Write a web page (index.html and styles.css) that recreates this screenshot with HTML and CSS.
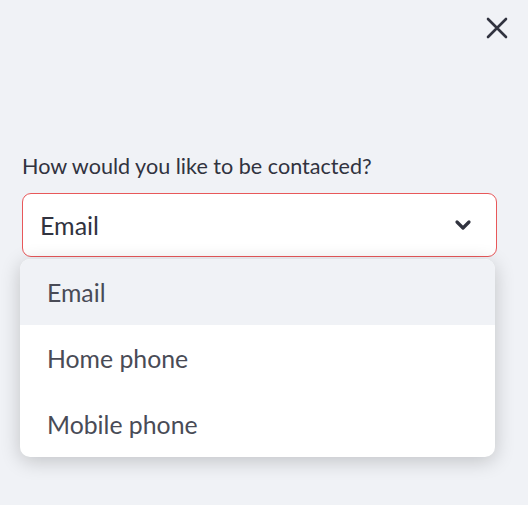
FILE: index.html
```html
<!DOCTYPE html>
<html>
<head>
<meta charset="utf-8">
<link rel="stylesheet" href="styles.css">
</head>
<body>
<div class="sidebar">
  <div class="topbar">
    <button class="close" aria-label="Close">
      <svg width="22" height="22" viewBox="0 0 22 22"><path d="M2 2 L20 20 M20 2 L2 20" stroke="#31333f" stroke-width="2.6" stroke-linecap="round" fill="none"/></svg>
    </button>
  </div>
  <div class="field">
    <label class="label">How would you like to be contacted?</label>
    <div class="selectwrap">
      <div class="select">
        <span class="value">Email</span>
        <svg class="chev" width="18" height="14" viewBox="0 0 18 14"><path d="M3 4 L9 10 L15 4" stroke="#31333f" stroke-width="3.2" stroke-linecap="round" stroke-linejoin="round" fill="none"/></svg>
      </div>
      <ul class="menu">
        <li class="item active">Email</li>
        <li class="item">Home phone</li>
        <li class="item">Mobile phone</li>
      </ul>
    </div>
  </div>
</div>
</body>
</html>
```
FILE: styles.css
```css
html, body {
  margin: 0;
  padding: 0;
  background: #f0f2f6;
  width: 528px;
  height: 505px;
  overflow: hidden;
  font-family: "Lato", "Open Sans", sans-serif;
  color: #31333f;
}
.sidebar {
  padding: 0 31px 0 22px;
}
.topbar {
  display: flex;
  justify-content: flex-end;
  height: 140px;
}
.close {
  margin-top: 16px;
  margin-right: -12px;
  width: 24px;
  height: 24px;
  padding: 1px;
  border: 0;
  background: transparent;
  display: flex;
  align-items: center;
  justify-content: center;
}
.field {
  display: flex;
  flex-direction: column;
}
.label {
  font-size: 21.6px;
  line-height: 28px;
  margin-top: 12px;
  margin-bottom: 13px;
}
.selectwrap {
  position: relative;
}
.select {
  height: 62px;
  border: 1px solid #e8585a;
  border-radius: 9px;
  background: #fff;
  display: flex;
  align-items: center;
  justify-content: space-between;
  padding: 0 24px 0 17px;
}
.value {
  font-size: 25px;
}
.chev {
  display: block;
}
.menu {
  position: absolute;
  left: -2px;
  right: 2px;
  top: 66px;
  margin: 0;
  padding: 0;
  list-style: none;
  background: #fff;
  border-radius: 10px;
  overflow: hidden;
  box-shadow: 0 4px 20px rgba(0, 0, 0, 0.2);
}
.item {
  height: 66px;
  display: flex;
  align-items: center;
  padding-left: 27px;
  font-size: 24.8px;
  color: #494b56;
}
.item.active {
  background: #f0f2f6;
}
```
